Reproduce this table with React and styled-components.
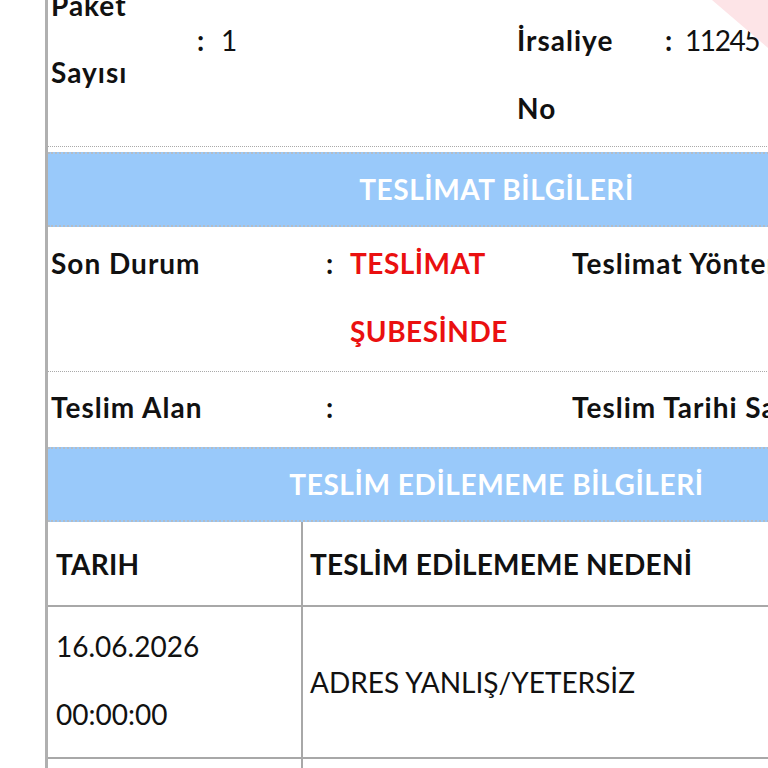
import React from "react";
import styled, { createGlobalStyle } from "styled-components";

const GlobalStyle = createGlobalStyle`
  html, body { margin: 0; padding: 0; background: #ffffff; overflow: hidden; }
  body { font-family: Lato, "Noto Sans", sans-serif; color: #111111; }
`;

const Viewport = styled.div`
  position: relative;
  width: 768px;
  height: 768px;
  overflow: hidden;
  background: #ffffff;
`;

const Page = styled.div`
  margin: -34px 0 0 45px;
  width: 897px;
  border-left: 3px solid #b0b0b0;
  font-size: 28px;
  line-height: 68px;
`;

const SummaryRow = styled.div`
  display: grid;
  grid-template-columns: 146px 320px 148px 1fr;
  align-items: start;
  min-height: 180px;
  border-bottom: 1px dotted #a9a9a9;
`;

const DetailRow = styled.div`
  display: grid;
  grid-template-columns: 275px 246px 1fr;
  align-items: start;
  padding: ${(p) => p.$pad};
  border-bottom: ${(p) => (p.$last ? "none" : "1px dotted #a9a9a9")};
`;

const Label = styled.div`
  font-weight: 700;
  letter-spacing: 1px;
  padding: ${(p) => p.$top || 0}px 0 0 3px;
  line-height: ${(p) => p.$lh || 68}px;
  white-space: nowrap;
`;

const Value = styled.div`
  display: flex;
  padding: ${(p) => p.$top || 0}px 0 0 3px;
  font-weight: ${(p) => (p.$bold ? 700 : 400)};
  letter-spacing: ${(p) => (p.$bold ? "0.5px" : "0")};
  color: ${(p) => p.$color || "#111111"};
`;

const Colon = styled.span`
  flex: none;
  width: ${(p) => p.$w || 24}px;
  font-weight: 700;
  letter-spacing: 0;
  color: #111111;
`;

const ValueText = styled.span`
  white-space: ${(p) => (p.$wrap ? "normal" : "nowrap")};
  letter-spacing: ${(p) => (p.$tight ? "-1.4px" : "inherit")};
`;

const SectionHeader = styled.div`
  margin-top: ${(p) => p.$gap}px;
  height: 71px;
  line-height: 71px;
  background: #99c9fa;
  border-top: 2px dotted #b3bcc6;
  border-bottom: 2px dotted #b3bcc6;
  color: #ffffff;
  font-weight: 700;
  text-align: center;
  letter-spacing: 0.6px;
`;

const Table = styled.div`
  display: grid;
  grid-template-columns: 255px 1fr;
`;

const Cell = styled.div`
  display: flex;
  flex-direction: column;
  justify-content: center;
  min-height: ${(p) => p.$h}px;
  padding: ${(p) => p.$pad};
  border-right: ${(p) => (p.$first ? "2px solid #a8a8a8" : "none")};
  border-bottom: 2px solid #a8a8a8;
  font-weight: ${(p) => (p.$head ? 700 : 400)};
  letter-spacing: ${(p) => (p.$head ? "0.2px" : "0")};
  box-sizing: border-box;
`;

const Ribbon = styled.svg`
  position: absolute;
  top: 0;
  right: 0;
  width: 60px;
  height: 52px;
`;

export default function App() {
  return (
    <Viewport>
      <GlobalStyle />
      <Page>
        <SummaryRow>
          <Label $top={6} $lh={67}>
            Paket
            <br />
            Sayısı
          </Label>
          <Value $top={40}>
            <Colon>:</Colon>
            <ValueText>1</ValueText>
          </Value>
          <Label $top={40}>
            İrsaliye
            <br />
            No
          </Label>
          <Value $top={40}>
            <Colon $w={20}>:</Colon>
            <ValueText $tight>11245</ValueText>
          </Value>
        </SummaryRow>

        <SectionHeader $gap={5}>TESLİMAT BİLGİLERİ</SectionHeader>

        <DetailRow $pad="2px 0 6px 0">
          <Label>Son Durum</Label>
          <Value $bold $color="#ea1010">
            <Colon>:</Colon>
            <ValueText $wrap>TESLİMAT ŞUBESİNDE</ValueText>
          </Value>
          <Label>Teslimat Yöntemi</Label>
        </DetailRow>
        <DetailRow $pad="1px 0 5px 0" $last>
          <Label>Teslim Alan</Label>
          <Value>
            <Colon>:</Colon>
            <ValueText></ValueText>
          </Value>
          <Label>Teslim Tarihi Saati</Label>
        </DetailRow>

        <SectionHeader $gap={1}>TESLİM EDİLEMEME BİLGİLERİ</SectionHeader>

        <Table>
          <Cell $first $head $h={85} $pad="0 8px">
            TARIH
          </Cell>
          <Cell $head $h={85} $pad="0 7px">
            TESLİM EDİLEMEME NEDENİ
          </Cell>
          <Cell $first $h={152} $pad="4px 8px 8px 8px">
            <span>16.06.2026</span>
            <span>00:00:00</span>
          </Cell>
          <Cell $h={152} $pad="0 7px">
            ADRES YANLIŞ/YETERSİZ
          </Cell>
          <Cell $first $h={120} $pad="0 8px">
            &nbsp;
          </Cell>
          <Cell $h={120} $pad="0 7px">
            &nbsp;
          </Cell>
        </Table>
      </Page>
      <Ribbon viewBox="0 0 60 52" aria-hidden="true">
        <polygon points="4,0 60,0 60,48" fill="#fde4e7" />
      </Ribbon>
    </Viewport>
  );
}
